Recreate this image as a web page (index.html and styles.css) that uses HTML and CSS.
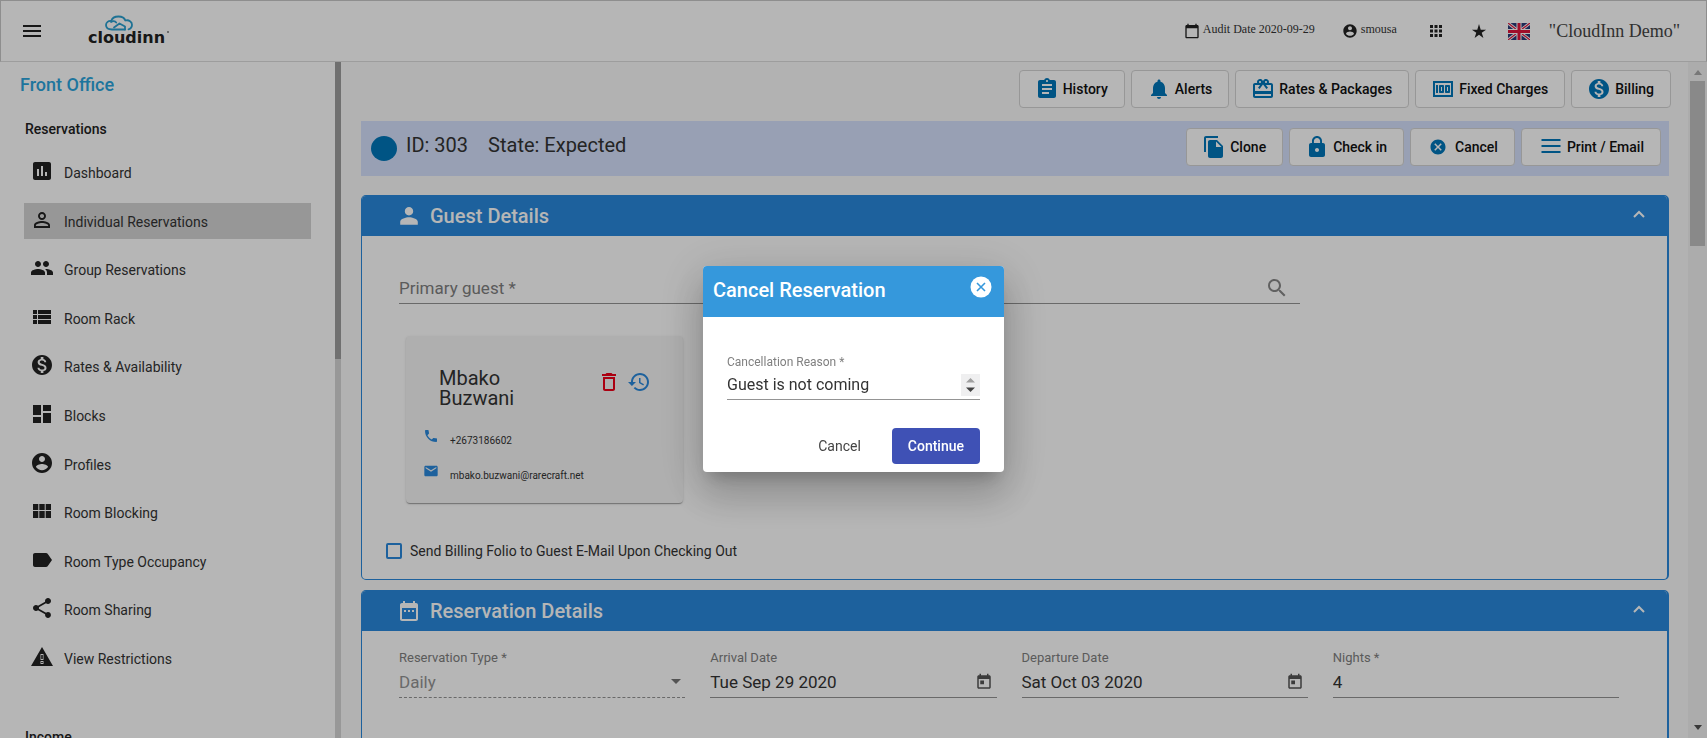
FILE: index.html
```html
<!DOCTYPE html>
<html lang="en">
<head>
<meta charset="utf-8">
<title>CloudInn - Individual Reservations</title>
<link rel="stylesheet" href="styles.css">
</head>
<body>
<div class="app">
  <header class="topbar">
    <button class="icon-btn" aria-label="Menu"><svg class="i24" viewBox="0 0 24 24"><path d="M3 18h18v-2H3v2zm0-5h18v-2H3v2zm0-7v2h18V6H3z"/></svg></button>
    <a class="logo" href="#" aria-label="cloudinn">
      <svg width="84" height="32" viewBox="0 0 84 32">
        <g fill="none" stroke="#2ba0d0" stroke-width="1.8" stroke-linecap="round" stroke-linejoin="round">
          <path d="M37 14.500H24c-4 0-6-2-6-4.500s2.500-4.500 5.200-4C24 3 27 1.500 30.500 1.500S36.500 3 37.300 5.500c3.700-1 6.700 1.300 6.700 4.200 0 2.300-1.500 4-3.500 4.600"/>
          <path d="M23 7c1.500-1.200 4-1 5.200.5M26 12.500l5.500-4 5.500 3v3"/>
        </g>
        <text class="logo-text" x="0" y="28">cloudinn</text>
        <circle cx="80" cy="17" r="1" fill="#777"/>
      </svg>
    </a>
    <div class="top-tools">
      <span class="tool"><svg class="i16" viewBox="0 0 24 24"><path d="M20 3h-1V1h-2v2H7V1H5v2H4c-1.100 0-2 .9-2 2v16c0 1.100.9 2 2 2h16c1.100 0 2-.9 2-2V5c0-1.100-.9-2-2-2zm0 18H4V8h16v13z"/></svg><span class="tool-text">Audit Date 2020-09-29</span></span>
      <span class="tool user"><svg class="i16" viewBox="0 0 24 24"><path d="M12 2C6.480 2 2 6.480 2 12s4.480 10 10 10 10-4.480 10-10S17.520 2 12 2zm0 3c1.660 0 3 1.340 3 3s-1.340 3-3 3-3-1.340-3-3 1.340-3 3-3zm0 14.200c-2.500 0-4.710-1.280-6-3.220.03-1.990 4-3.080 6-3.080 1.990 0 5.970 1.090 6 3.080-1.290 1.940-3.500 3.220-6 3.220z"/></svg><span class="tool-text">smousa</span></span>
      <button class="icon-btn apps" aria-label="Apps"><svg class="i18" viewBox="0 0 24 24"><path d="M4 8h4V4H4v4zm6 12h4v-4h-4v4zm-6 0h4v-4H4v4zm0-6h4v-4H4v4zm6 0h4v-4h-4v4zm6-10v4h4V4h-4zm-6 4h4V4h-4v4zm6 6h4v-4h-4v4zm0 6h4v-4h-4v4z"/></svg></button>
      <button class="icon-btn star" aria-label="Favourites"><svg class="i16" viewBox="0 0 24 24"><path d="M12 17.800l6.600 4.700-2.500-7.700L22.600 10h-8L12 1.500 9.400 10h-8l6.500 4.800-2.500 7.700z"/></svg></button>
      <button class="icon-btn flag" aria-label="English"><svg width="22" height="17" viewBox="0 0 22 17"><path fill="#2a3a78" d="M0 0h22v17H0z"/><path stroke="#fff" stroke-width="3" d="M0 0l22 17M22 0L0 17"/><path stroke="#e0143c" stroke-width="1.200" d="M0 0l22 17M22 0L0 17"/><path stroke="#fff" stroke-width="5" d="M11 0v17M0 8.500h22"/><path stroke="#e0143c" stroke-width="3" d="M11 0v17M0 8.500h22"/></svg></button>
      <span class="hotel">"CloudInn Demo"</span>
    </div>
  </header>

  <div class="body">
    <nav class="sidebar">
      <div class="side-content">
        <h1 class="side-title">Front Office</h1>
        <h2 class="side-group">Reservations</h2>
        <ul class="side-list">
          <li><a class="side-item" href="#"><svg class="i24" viewBox="0 0 24 24"><path d="M19 3H5c-1.100 0-2 .9-2 2v14c0 1.100.9 2 2 2h14c1.100 0 2-.9 2-2V5c0-1.100-.9-2-2-2zM9 17H7v-7h2v7zm4 0h-2V7h2v10zm4 0h-2v-4h2v4z"/></svg><span>Dashboard</span></a></li>
          <li><a class="side-item active" href="#"><svg class="i24" viewBox="0 0 24 24"><path d="M12 5.900c1.160 0 2.100.94 2.100 2.100s-.94 2.100-2.100 2.100S9.900 9.160 9.900 8s.94-2.100 2.100-2.100m0 9c2.970 0 6.100 1.460 6.100 2.100v1.100H5.900V17c0-.64 3.130-2.100 6.100-2.100M12 4C9.790 4 8 5.790 8 8s1.790 4 4 4 4-1.790 4-4-1.790-4-4-4zm0 9c-2.670 0-8 1.340-8 4v3h16v-3c0-2.660-5.330-4-8-4z"/></svg><span>Individual Reservations</span></a></li>
          <li><a class="side-item" href="#"><svg class="i24" viewBox="0 0 24 24"><path d="M16 11c1.660 0 2.990-1.340 2.990-3S17.660 5 16 5c-1.660 0-3 1.340-3 3s1.340 3 3 3zm-8 0c1.660 0 2.990-1.340 2.990-3S9.660 5 8 5C6.340 5 5 6.340 5 8s1.340 3 3 3zm0 2c-2.330 0-7 1.170-7 3.500V19h14v-2.500c0-2.330-4.670-3.500-7-3.500zm8 0c-.29 0-.62.020-.97.050 1.160.84 1.970 1.970 1.970 3.450V19h6v-2.500c0-2.330-4.670-3.500-7-3.500z"/></svg><span>Group Reservations</span></a></li>
          <li><a class="side-item" href="#"><svg class="i24" viewBox="0 0 24 24"><path d="M3 14h4v-4H3v4zm0 5h4v-4H3v4zM3 9h4V5H3v4zm5 5h13v-4H8v4zm0 5h13v-4H8v4zM8 5v4h13V5H8z"/></svg><span>Room Rack</span></a></li>
          <li><a class="side-item" href="#"><svg class="i24" viewBox="0 0 24 24"><path d="M12 2C6.480 2 2 6.480 2 12s4.480 10 10 10 10-4.480 10-10S17.520 2 12 2zm1.410 16.090V20h-2.670v-1.930c-1.710-.36-3.160-1.460-3.270-3.400h1.960c.1 1.050.82 1.870 2.650 1.870 1.960 0 2.400-.98 2.400-1.590 0-.83-.44-1.610-2.670-2.140-2.480-.6-4.180-1.620-4.180-3.670 0-1.720 1.390-2.840 3.110-3.210V4h2.670v1.950c1.860.45 2.790 1.860 2.850 3.390H14.300c-.05-1.110-.64-1.870-2.220-1.870-1.500 0-2.400.68-2.400 1.640 0 .84.65 1.390 2.670 1.910s4.180 1.390 4.180 3.910c-.01 1.830-1.380 2.830-3.120 3.160z"/></svg><span>Rates &amp; Availability</span></a></li>
          <li><a class="side-item" href="#"><svg class="i24" viewBox="0 0 24 24"><path d="M3 13h8V3H3v10zm0 8h8v-6H3v6zm10 0h8V11h-8v10zm0-18v6h8V3h-8z"/></svg><span>Blocks</span></a></li>
          <li><a class="side-item" href="#"><svg class="i24" viewBox="0 0 24 24"><path d="M12 2C6.480 2 2 6.480 2 12s4.480 10 10 10 10-4.480 10-10S17.520 2 12 2zm0 3c1.660 0 3 1.340 3 3s-1.340 3-3 3-3-1.340-3-3 1.340-3 3-3zm0 14.200c-2.500 0-4.710-1.280-6-3.220.03-1.990 4-3.080 6-3.080 1.990 0 5.970 1.090 6 3.080-1.290 1.940-3.500 3.220-6 3.220z"/></svg><span>Profiles</span></a></li>
          <li><a class="side-item" href="#"><svg class="i24" viewBox="0 0 24 24"><path d="M3 11h5.300V5H3v6zm0 8h5.300v-7H3v7zm6.300 0h5.400v-7H9.300v7zm6.400 0H21v-7h-5.300v7zm-6.400-8h5.400V5H9.300v6zm6.400-6v6H21V5h-5.300z"/></svg><span>Room Blocking</span></a></li>
          <li><a class="side-item" href="#"><svg class="i24" viewBox="0 0 24 24"><path d="M17.630 5.840C17.270 5.330 16.670 5 16 5L5 5.010C3.900 5.010 3 5.900 3 7v10c0 1.100.9 1.990 2 1.990L16 19c.67 0 1.270-.33 1.630-.84L22 12l-4.370-6.160z"/></svg><span>Room Type Occupancy</span></a></li>
          <li><a class="side-item" href="#"><svg class="i24" viewBox="0 0 24 24"><path d="M18 16.080c-.76 0-1.440.3-1.960.77L8.910 12.700c.05-.23.09-.46.09-.7s-.04-.47-.09-.7l7.050-4.110c.54.5 1.250.81 2.040.81 1.660 0 3-1.340 3-3s-1.340-3-3-3-3 1.340-3 3c0 .24.04.47.09.7L8.040 9.810C7.500 9.310 6.790 9 6 9c-1.660 0-3 1.340-3 3s1.340 3 3 3c.79 0 1.500-.31 2.040-.81l7.120 4.160c-.05.21-.08.43-.08.65 0 1.610 1.310 2.920 2.920 2.920s2.920-1.310 2.920-2.920-1.310-2.920-2.920-2.920z"/></svg><span>Room Sharing</span></a></li>
          <li><a class="side-item" href="#"><svg class="i24" viewBox="0 0 24 24"><path d="M1 21h22L12 2 1 21zm12.500-2h-3v-3h3v3zm0-4h-3V9h3v6z"/><path d="M11.200 10h1.600v4h-1.600zM11.200 17h1.600v1h-1.600z"/></svg><span>View Restrictions</span></a></li>
        </ul>
        <h2 class="side-group next">Income</h2>
      </div>
      <div class="side-scroll"><div class="side-thumb"></div></div>
    </nav>

    <main class="main">
      <div class="actions">
        <button class="action"><svg class="i24" viewBox="0 0 24 24"><path d="M19 3h-4.180C14.400 1.840 13.300 1 12 1c-1.300 0-2.400.84-2.820 2H5c-1.100 0-2 .9-2 2v14c0 1.100.9 2 2 2h14c1.100 0 2-.9 2-2V5c0-1.100-.9-2-2-2zm-7 0c.55 0 1 .45 1 1s-.45 1-1 1-1-.45-1-1 .45-1 1-1zm2 14H7v-2h7v2zm3-4H7v-2h10v2zm0-4H7V7h10v2z"/></svg>History</button>
        <button class="action"><svg class="i24" viewBox="0 0 24 24"><path d="M12 22c1.100 0 2-.9 2-2h-4c0 1.100.89 2 2 2zm6-6v-5c0-3.070-1.640-5.640-4.500-6.320V4c0-.83-.67-1.500-1.500-1.500s-1.500.67-1.500 1.500v.68C7.630 5.360 6 7.920 6 11v5l-2 2v1h16v-1l-2-2z"/></svg>Alerts</button>
        <button class="action"><svg class="i24" viewBox="0 0 24 24"><path d="M20 6h-2.180c.11-.31.18-.65.18-1 0-1.660-1.340-3-3-3-1.050 0-1.960.54-2.500 1.350l-.5.670-.5-.68C10.960 2.540 10.050 2 9 2 7.340 2 6 3.340 6 5c0 .35.070.69.180 1H4c-1.110 0-1.990.89-1.990 2L2 19c0 1.110.89 2 2 2h16c1.110 0 2-.89 2-2V8c0-1.110-.89-2-2-2zm-5-2c.55 0 1 .45 1 1s-.45 1-1 1-1-.45-1-1 .45-1 1-1zM9 4c.55 0 1 .45 1 1s-.45 1-1 1-1-.45-1-1 .45-1 1-1zm11 15H4v-2h16v2zm0-5H4V8h5.080L7 10.830 8.620 12 11 8.760l1-1.360 1 1.360L15.380 12 17 10.830 14.920 8H20v6z"/></svg>Rates &amp; Packages</button>
        <button class="action"><svg class="i24" viewBox="0 0 24 24"><path d="M15 16h3c.55 0 1-.45 1-1V9c0-.55-.45-1-1-1h-3c-.55 0-1 .45-1 1v6c0 .55.45 1 1 1zm1-6h1v4h-1v-4zm-7 6h3c.55 0 1-.45 1-1V9c0-.55-.45-1-1-1H9c-.55 0-1 .45-1 1v6c0 .55.45 1 1 1zm1-6h1v4h-1v-4zM5 8h2v8H5zM2 4v16h20V4H2zm2 14V6h16v12H4z"/></svg>Fixed Charges</button>
        <button class="action"><svg class="i24" viewBox="0 0 24 24"><path d="M12 2C6.480 2 2 6.480 2 12s4.480 10 10 10 10-4.480 10-10S17.520 2 12 2zm1.410 16.090V20h-2.670v-1.930c-1.710-.36-3.160-1.460-3.270-3.400h1.960c.1 1.050.82 1.870 2.650 1.870 1.960 0 2.400-.98 2.400-1.590 0-.83-.44-1.610-2.670-2.140-2.480-.6-4.180-1.620-4.180-3.670 0-1.720 1.390-2.840 3.110-3.210V4h2.670v1.950c1.860.45 2.790 1.860 2.850 3.390H14.300c-.05-1.110-.64-1.870-2.220-1.870-1.500 0-2.400.68-2.400 1.640 0 .84.65 1.390 2.670 1.910s4.180 1.390 4.180 3.910c-.01 1.830-1.380 2.830-3.120 3.160z"/></svg>Billing</button>
      </div>

      <section class="ribbon">
        <span class="dot"></span>
        <span class="res-id">ID: 303</span>
        <span class="res-state">State: Expected</span>
        <div class="ribbon-actions">
          <button class="action"><svg class="i24" viewBox="0 0 24 24"><path d="M16 1H4c-1.100 0-2 .9-2 2v14h2V3h12V1zm-1 4l6 6v10c0 1.100-.9 2-2 2H7.990C6.890 23 6 22.100 6 21l.01-14c0-1.100.89-2 1.990-2h7zm-1 7h5.500L14 6.500V12z"/></svg>Clone</button>
          <button class="action"><svg class="i24" viewBox="0 0 24 24"><path d="M18 8h-1V6c0-2.760-2.240-5-5-5S7 3.240 7 6v2H6c-1.100 0-2 .9-2 2v10c0 1.100.9 2 2 2h12c1.100 0 2-.9 2-2V10c0-1.100-.9-2-2-2zm-6 9c-1.100 0-2-.9-2-2s.9-2 2-2 2 .9 2 2-.9 2-2 2zm3.100-9H8.900V6c0-1.710 1.390-3.100 3.100-3.100 1.710 0 3.100 1.390 3.100 3.100v2z"/></svg>Check in</button>
          <button class="action wide"><svg class="i18" viewBox="0 0 24 24"><path d="M12 2C6.470 2 2 6.470 2 12s4.470 10 10 10 10-4.470 10-10S17.530 2 12 2zm5 13.590L15.590 17 12 13.410 8.410 17 7 15.590 10.590 12 7 8.410 8.410 7 12 10.590 15.590 7 17 8.410 13.410 12 17 15.590z"/></svg>Cancel</button>
          <button class="action print"><svg class="i24" viewBox="0 0 24 24"><path d="M2.500 4h19v2h-19zM2.500 10h19v2h-19zM2.500 16h19v2h-19z"/></svg>Print / Email</button>
        </div>
      </section>

      <section class="panel">
        <header class="panel-head">
          <svg class="i24" viewBox="0 0 24 24"><path d="M12 11.500c2.300 0 4.200-1.900 4.200-4.200S14.300 3.100 12 3.100 7.800 5 7.800 7.300s1.900 4.200 4.200 4.200zM12 13.300c-3 0-8.800 1.500-8.800 4.500v3h17.600v-3c0-3-5.800-4.500-8.800-4.500z"/></svg>
          <h3 class="panel-title">Guest Details</h3>
          <button class="chevron" aria-label="Collapse"><svg width="12" height="8" viewBox="0 0 12 8"><path d="M1 7l5-5 5 5" fill="none" stroke="#fff" stroke-width="2"/></svg></button>
        </header>
        <div class="panel-body guest">
          <div class="search-field">
            <input class="search-input" type="text" placeholder="Primary guest *" aria-label="Primary guest">
            <svg class="i24" viewBox="0 0 24 24"><path d="M15.500 14h-.79l-.28-.27C15.410 12.590 16 11.110 16 9.500 16 5.910 13.090 3 9.500 3S3 5.910 3 9.500 5.910 16 9.500 16c1.610 0 3.090-.59 4.230-1.570l.27.28v.79l5 4.990L20.490 19l-4.990-5zm-6 0C7.010 14 5 11.990 5 9.500S7.010 5 9.500 5 14 7.010 14 9.500 11.990 14 9.500 14z"/></svg>
          </div>
          <article class="guest-card">
            <div class="guest-head">
              <h4 class="guest-name">Mbako Buzwani</h4>
              <button class="icon-btn del" aria-label="Delete"><svg class="i24" viewBox="0 0 24 24"><path d="M6 19c0 1.100.9 2 2 2h8c1.100 0 2-.9 2-2V7H6v12zM8 9h8v10H8V9zm7.500-5l-1-1h-5l-1 1H5v2h14V4z"/></svg></button>
              <button class="icon-btn hist" aria-label="History"><svg class="i24" viewBox="0 0 24 24"><path d="M13 3c-4.970 0-9 4.030-9 9H1l3.890 3.890.07.14L9 12H6c0-3.870 3.130-7 7-7s7 3.130 7 7-3.130 7-7 7c-1.930 0-3.680-.79-4.940-2.060l-1.420 1.420C8.270 19.990 10.510 21 13 21c4.970 0 9-4.030 9-9s-4.030-9-9-9zm-1 5v5l4.280 2.540.72-1.210-3.500-2.080V8H12z"/></svg></button>
            </div>
            <div class="contact"><svg class="i16" viewBox="0 0 24 24"><path d="M6.620 10.790c1.440 2.830 3.760 5.140 6.590 6.590l2.200-2.200c.27-.27.67-.36 1.020-.24 1.120.37 2.330.57 3.570.57.55 0 1 .45 1 1V20c0 .55-.45 1-1 1-9.390 0-17-7.610-17-17 0-.55.45-1 1-1h3.500c.55 0 1 .45 1 1 0 1.250.2 2.450.57 3.570.11.35.03.74-.25 1.020l-2.200 2.200z"/></svg><span>+2673186602</span></div>
            <div class="contact"><svg class="i16" viewBox="0 0 24 24"><path d="M20 4H4c-1.100 0-1.990.9-1.990 2L2 18c0 1.100.9 2 2 2h16c1.100 0 2-.9 2-2V6c0-1.100-.9-2-2-2zm0 4l-8 5-8-5V6l8 5 8-5v2z"/></svg><span>mbako.buzwani@rarecraft.net</span></div>
          </article>
          <label class="check"><input class="check-box" type="checkbox">Send Billing Folio to Guest E-Mail Upon Checking Out</label>
        </div>
      </section>

      <section class="panel">
        <header class="panel-head">
          <svg class="i24" viewBox="0 0 24 24"><path d="M9 11H7v2h2v-2zm4 0h-2v2h2v-2zm4 0h-2v2h2v-2zm2-7h-1V2h-2v2H8V2H6v2H5c-1.110 0-2 .9-2 2v14c0 1.100.89 2 2 2h14c1.100 0 2-.9 2-2V6c0-1.100-.9-2-2-2zm0 16H5V9h14v11z"/></svg>
          <h3 class="panel-title">Reservation Details</h3>
          <button class="chevron" aria-label="Collapse"><svg width="12" height="8" viewBox="0 0 12 8"><path d="M1 7l5-5 5 5" fill="none" stroke="#fff" stroke-width="2"/></svg></button>
        </header>
        <div class="panel-body fields">
          <div class="field disabled">
            <label class="field-label" for="rtype">Reservation Type *</label>
            <div class="field-row"><select class="field-input" id="rtype" disabled><option>Daily</option></select><svg class="caret" width="10" height="5" viewBox="0 0 10 5"><path d="M0 0l5 5 5-5z"/></svg></div>
          </div>
          <div class="field">
            <label class="field-label" for="arr">Arrival Date</label>
            <div class="field-row"><input class="field-input" id="arr" type="text" value="Tue Sep 29 2020"><svg class="i18" viewBox="0 0 24 24"><path d="M19 3h-1V1h-2v2H8V1H6v2H5c-1.110 0-1.990.9-1.990 2L3 19c0 1.100.89 2 2 2h14c1.100 0 2-.9 2-2V5c0-1.100-.9-2-2-2zm0 16H5V8h14v11zM7 10h5v5H7z"/></svg></div>
          </div>
          <div class="field">
            <label class="field-label" for="dep">Departure Date</label>
            <div class="field-row"><input class="field-input" id="dep" type="text" value="Sat Oct 03 2020"><svg class="i18" viewBox="0 0 24 24"><path d="M19 3h-1V1h-2v2H8V1H6v2H5c-1.110 0-1.990.9-1.990 2L3 19c0 1.100.89 2 2 2h14c1.100 0 2-.9 2-2V5c0-1.100-.9-2-2-2zm0 16H5V8h14v11zM7 10h5v5H7z"/></svg></div>
          </div>
          <div class="field">
            <label class="field-label" for="nights">Nights *</label>
            <div class="field-row"><input class="field-input" id="nights" type="text" value="4"></div>
          </div>
        </div>
      </section>
    </main>

    <div class="page-scroll">
      <svg width="8" height="5" viewBox="0 0 8 5"><path fill="#a8a8a8" d="M0 5l4-5 4 5z"/></svg>
      <div class="page-thumb"></div>
      <svg class="down" width="8" height="5" viewBox="0 0 8 5"><path fill="#505050" d="M0 0l4 5 4-5z"/></svg>
    </div>
  </div>
</div>

<div class="backdrop">
  <section class="dialog" role="dialog" aria-labelledby="dlg-title">
    <header class="dialog-head">
      <h2 class="dialog-title" id="dlg-title">Cancel Reservation</h2>
      <button class="dialog-close" aria-label="Close"><svg width="22" height="22" viewBox="0 0 22 22"><circle cx="11" cy="11" r="10.500" fill="#fff"/><path d="M7 7l8 8M15 7l-8 8" stroke="#3598dc" stroke-width="1.600"/></svg></button>
    </header>
    <div class="dialog-body">
      <div class="field">
        <label class="field-label" for="reason">Cancellation Reason *</label>
        <div class="field-row reason"><select class="field-input" id="reason"><option>Guest is not coming</option></select><span class="spin"><svg width="9" height="14" viewBox="0 0 9 14"><path fill="#a0a0a0" d="M0 4.500L4.500 0 9 4.500z"/><path fill="#444" d="M0 9.500L4.500 14 9 9.500z"/></svg></span></div>
      </div>
      <div class="dialog-actions">
        <button class="btn-flat">Cancel</button>
        <button class="btn-primary">Continue</button>
      </div>
    </div>
  </section>
</div>
</body>
</html>
```
FILE: styles.css
```css
* { box-sizing: border-box; }
body { margin: 0; overflow: hidden; font-family: Roboto, "Liberation Sans", sans-serif; font-size: 14px; color: #333; background: #fafafa; }
h1, h2, h3, h4 { margin: 0; font-weight: 500; }
ul { margin: 0; padding: 0; list-style: none; }
button, input, select { font: inherit; color: inherit; margin: 0; padding: 0; border: 0; background: none; outline: 0; appearance: none; opacity: 1; }
a { color: inherit; text-decoration: none; }
svg { display: block; flex: none; fill: currentColor; }
.i24 { width: 24px; height: 24px; }
.i18 { width: 18px; height: 18px; }
.i16 { width: 16px; height: 16px; }

.app { display: flex; flex-direction: column; height: 100vh; }
.topbar { display: flex; align-items: center; flex: none; height: 62px; padding: 0 26px 0 19px; border: 1px solid #c8c8c8; border-bottom-color: #dcdcdc; background: #fff; color: #222; }
.icon-btn { display: block; }
.logo { margin-left: 44px; }
.logo-text { font: bold 16px "DejaVu Sans", sans-serif; fill: #222; }
.top-tools { display: flex; align-items: center; margin-left: auto; font-family: "Liberation Serif", "Times New Roman", serif; }
.tool { display: flex; align-items: center; gap: 3px; font-size: 12px; }
.tool-text { padding-bottom: 3px; color: #333; }
.user { margin-left: 27px; }
.apps { margin-left: 30px; }
.star { margin-left: 26px; }
.flag { margin-left: 21px; }
.hotel { margin-left: 19px; font-size: 18px; color: #444; }

.body { display: flex; flex: 1; min-height: 0; }
.sidebar { display: flex; flex: none; width: 341px; background: #fff; overflow: hidden; }
.side-content { flex: 1; padding: 11px 24px 0; }
.side-title { margin-left: -4px; font-size: 18px; line-height: 24px; color: #2ba5dd; }
.side-group { margin-top: 22px; padding-left: 1px; font-size: 14px; line-height: 20px; color: #222; }
.side-group.next { margin-top: 51px; }
.side-list { display: flex; flex-direction: column; justify-content: space-between; min-height: 522px; margin-top: 15px; }
.side-item { display: flex; align-items: center; gap: 10px; height: 36px; padding: 2px 0 0 6px; }
.side-item svg { margin-bottom: 4px; color: #222; }
.side-item.active { background: #d4d4d4; }
.side-scroll { width: 6px; background: #d5d5d5; }
.side-thumb { height: 44%; background: #9d9d9d; }

.main { flex: 1; min-width: 0; padding: 8px 19px 0 20px; overflow: hidden; }
.actions { display: flex; justify-content: flex-end; gap: 6px; margin-right: -2px; }
.action { display: flex; align-items: center; gap: 4px; height: 38px; padding: 0 16px 0 15px; border: 1px solid #d4d4d4; border-radius: 4px; background: #fff; font-weight: 500; color: #111; white-space: nowrap; }
.action svg { color: #0076b9; }
.action.wide { gap: 8px; padding-left: 18px; }
.action.print { padding-left: 17px; }
.ribbon { display: flex; align-items: center; height: 55px; margin-top: 13px; padding: 0 8px 0 10px; background: #d5e1fc; font-size: 20px; }
.dot { width: 26px; height: 25px; border-radius: 50%; background: #0076b9; }
.res-id { margin-left: 9px; padding-bottom: 8px; }
.res-state { margin-left: 20px; padding-bottom: 8px; }
.ribbon-actions { display: flex; gap: 6px; margin: 0 0 3px auto; font-size: 14px; }

.panel { margin-top: 19px; border: 1px solid #2989dc; border-right-width: 2px; border-radius: 5px; background: #fff; overflow: hidden; }
.panel + .panel { margin-top: 10px; }
.panel-head { display: flex; align-items: center; height: 40px; padding: 0 22px 0 35px; background: #2989dc; color: #fff; }
.panel-title { margin-left: 9px; font-size: 20px; }
.chevron { margin: 0 0 4px auto; }
.guest { padding: 40px 24px 20px; }
.search-field { display: flex; align-items: center; width: 901px; max-width: 100%; height: 28px; margin-left: 13px; padding: 0 11px 3px 0; border-bottom: 1px solid #949494; color: #888; }
.search-input { flex: 1; font-size: 17px; }
.search-input::placeholder { color: #808080; opacity: 1; }
.guest-card { width: 277px; margin: 32px 0 0 20px; padding: 31px 32px 5px 19px; border-radius: 4px; background: #f5f5f5; box-shadow: 0 2px 1px -1px rgba(0,0,0,.2), 0 1px 1px rgba(0,0,0,.14), 0 1px 3px rgba(0,0,0,.12); }
.guest-head { display: flex; align-items: center; margin-bottom: 20px; }
.guest-name { width: 100px; margin: 0 auto 0 14px; padding-top: 1px; font-size: 20px; font-weight: 400; line-height: 20px; }
.guest-head .icon-btn { margin-bottom: 12px; }
.del { color: #f00018; }
.hist { margin-left: 6px; color: #2989dc; }
.contact { display: flex; align-items: flex-start; gap: 11px; height: 35px; font-size: 10px; }
.contact svg { color: #2989dc; margin-left: -2px; }
.contact span { padding-top: 7px; }
.check { display: flex; align-items: center; gap: 8px; margin-top: 40px; }
.check-box { width: 16px; height: 16px; border: 2px solid #2989dc; border-radius: 2px; }

.fields { display: grid; grid-template-columns: repeat(4, 1fr); gap: 25px; padding: 19px 48px 60px 37px; }
.field { display: flex; flex-direction: column; }
.field-label { font-size: 12px; line-height: 16px; color: #808080; }
.field-row { display: flex; align-items: center; height: 32px; padding-right: 4px; border-bottom: 1px solid #949494; color: #555; }
.field-input { flex: 1; min-width: 0; font-size: 16px; line-height: 20px; color: #333; }
.fields .field-label { font-size: 13px; }
.fields .field-input { font-size: 17px; }
.disabled .field-row { border-bottom-style: dashed; }
.disabled .field-input { color: #949494; }
.caret { color: #757575; }

.page-scroll { display: flex; flex-direction: column; align-items: center; flex: none; width: 19px; padding: 8px 0; background: #f1f1f1; }
.page-thumb { width: 15px; height: 25%; margin-top: 6px; background: #c1c1c1; }
.page-scroll .down { margin-top: auto; }

.backdrop { position: fixed; inset: 0; display: grid; place-items: center; background: rgba(0,0,0,.288); }
.dialog { width: 301px; border-radius: 4px; background: #fff; overflow: hidden; box-shadow: 0 11px 15px -7px rgba(0,0,0,.2), 0 24px 38px 3px rgba(0,0,0,.14), 0 9px 46px 8px rgba(0,0,0,.12); }
.dialog-head { display: flex; align-items: center; justify-content: space-between; height: 51px; padding: 0 12px 3px 10px; background: #3598dc; color: #fff; }
.dialog-title { font-size: 20px; }
.dialog-close { margin-bottom: 6px; }
.dialog-body { padding: 37px 24px 8px; }
.reason { height: 30px; padding: 0; }
.spin { display: grid; place-items: center; width: 19px; height: 22px; background: #efeff0; }
.dialog-actions { display: flex; justify-content: flex-end; align-items: center; margin-top: 28px; }
.btn-flat { padding: 0 15px; color: #444; }
.btn-primary { height: 36px; margin-left: 16px; padding: 0 16px; border-radius: 4px; background: #3f51b5; color: #fff; font-weight: 500; }
```
